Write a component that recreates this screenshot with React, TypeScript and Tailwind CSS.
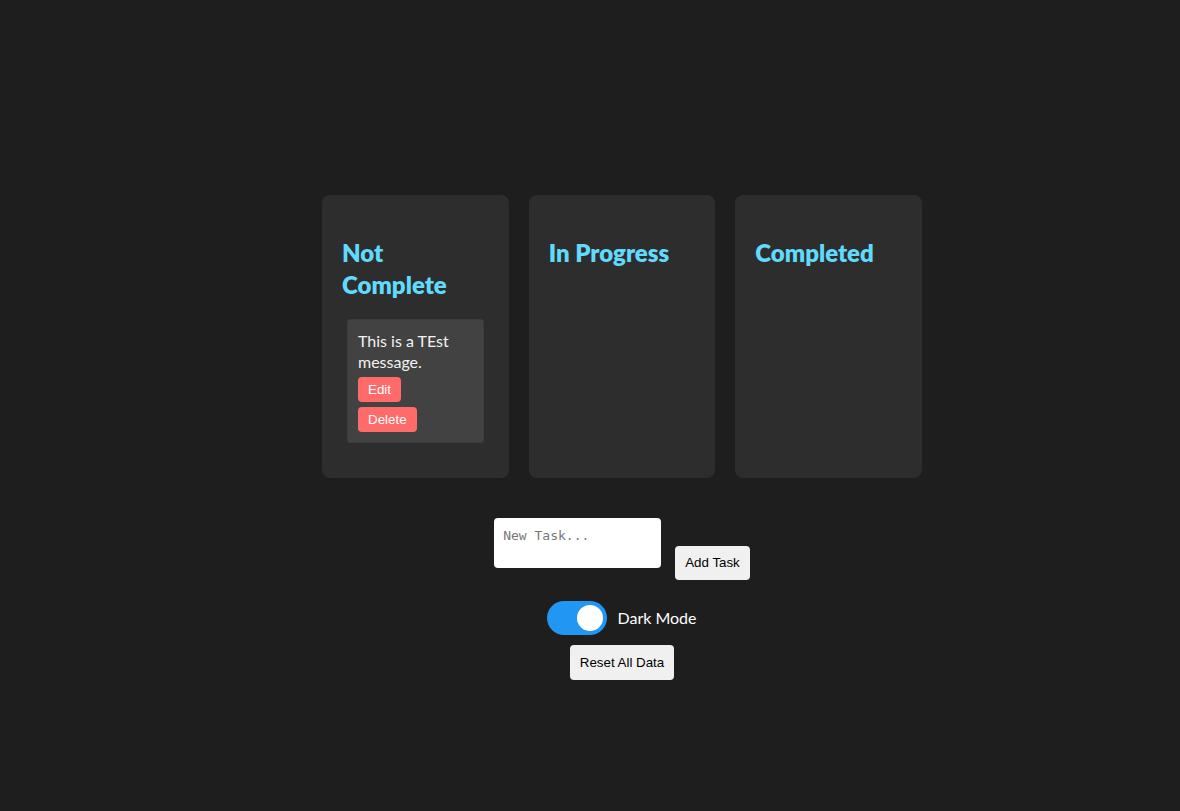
import { useState } from "react";

interface Task {
    id: number;
    text: string;
    status: "not" | "progress" | "done";
}

const columns: { key: Task["status"]; title: string }[] = [
    { key: "not", title: "Not Complete" },
    { key: "progress", title: "In Progress" },
    { key: "done", title: "Completed" },
];

export default function App() {
    const [tasks] = useState<Task[]>([{ id: 1, text: "This is a TEst message.", status: "not" }]);
    const [newTask, setNewTask] = useState("");
    const [dark, setDark] = useState(true);

    return (
        <div className="min-h-[811px] bg-[#1e1e1e] text-white font-['Lato','Noto_Sans',sans-serif] pt-[195px] pl-[64px]">
            <div className="flex flex-col items-center">
                {/* Columns */}
                <div className="flex gap-[20px]">
                    {columns.map(c => (
                        <div key={c.key} className="w-[186.67px] min-h-[283px] bg-[#2d2d2d] rounded-[8px] p-[20px]">
                            <h2 className="text-[24px] leading-[32px] font-extrabold text-[#61dafb] mt-[22px] mb-[18px]">{c.title}</h2>
                            {tasks.filter(t => t.status === c.key).map(t => (
                                <div key={t.id} className="mx-[5px] bg-[#424242] rounded-[3px] p-[10px] border border-[#3c3c3c]">
                                    <p className="text-[16px] leading-[21px] text-[#f2f2f2]">{t.text}</p>
                                    <div className="flex flex-col items-start">
                                        <button className="mt-[5px] bg-[#ff6b6b] text-white text-[13.33px] h-[25px] px-[10px] rounded-[4px] font-['Liberation_Sans',Arial,sans-serif]">Edit</button>
                                        <button className="mt-[5px] bg-[#ff6b6b] text-white text-[13.33px] h-[25px] px-[10px] rounded-[4px] font-['Liberation_Sans',Arial,sans-serif]">Delete</button>
                                    </div>
                                </div>
                            ))}
                        </div>
                    ))}
                </div>

                {/* Add task */}
                <div className="flex items-start gap-[14px] mt-[40px]">
                    <textarea
                        placeholder="New Task..."
                        value={newTask}
                        onChange={e => setNewTask(e.target.value)}
                        className="w-[167px] h-[50px] bg-white text-black rounded-[4px] px-[9px] py-[10px] text-[13px] leading-[16px] resize-none outline-none placeholder:text-[#777] font-['DejaVu_Sans_Mono',monospace]"
                    />
                    <button className="mt-[28px] h-[34px] px-[10px] bg-[#f0f0f0] text-black text-[13.33px] rounded-[4px] font-['Liberation_Sans',Arial,sans-serif]">Add Task</button>
                </div>

                {/* Dark mode toggle */}
                <div className="flex items-center gap-[10px] mt-[21px]">
                    <button
                        onClick={() => setDark(!dark)}
                        className={"relative w-[60px] h-[34px] rounded-full " + (dark ? "bg-[#2196f3]" : "bg-[#ccc]")}
                    >
                        <span className={"absolute top-[4px] w-[26px] h-[26px] rounded-full bg-white " + (dark ? "left-[30px]" : "left-[4px]")} />
                    </button>
                    <span className="text-[16px]">Dark Mode</span>
                </div>

                <button className="mt-[10px] h-[35px] px-[10px] bg-[#f0f0f0] text-black text-[13.33px] rounded-[4px] font-['Liberation_Sans',Arial,sans-serif]">Reset All Data</button>
            </div>
        </div>
    );
}
